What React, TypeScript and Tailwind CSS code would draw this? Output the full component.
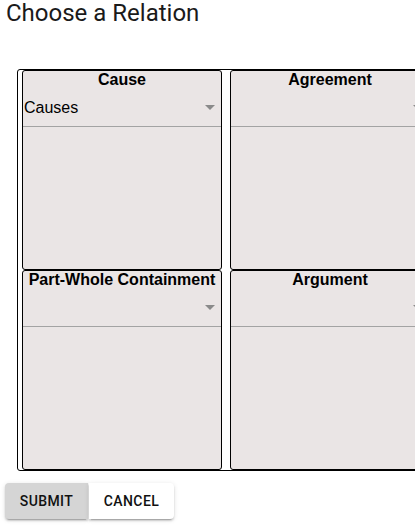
import React from "react"

const relations = [
  { title: "Cause", value: "Causes" },
  { title: "Agreement", value: "" },
  { title: "Part-Whole Containment", value: "" },
  { title: "Argument", value: "" },
]

function RelationCell({ title, value }: { title: string; value: string }) {
  return (
    <div className="flex h-[200px] w-[200px] shrink-0 flex-col rounded-[3px] border border-black bg-[#eae5e5]">
      <div className="text-center text-[16px] font-bold leading-[18px] text-black">{title}</div>
      {/* select */}
      <div className="flex h-[38px] items-start justify-between border-b border-[#a3a3a3] pl-[1px] pr-[6px] pt-[9px]">
        <span className="h-[19px] text-[16px] leading-[19px] text-black">{value}</span>
        <svg width="10" height="5" viewBox="0 0 10 5" className="mt-[7px]">
          <path d="M0 0 L10 0 L5 5 Z" fill="#8a8a8a" />
        </svg>
      </div>
    </div>
  )
}

export default function App() {
  return (
    <div
      className="h-[528px] w-[415px] overflow-hidden bg-white"
      style={{ fontFamily: '"Liberation Sans", Arial, sans-serif' }}
    >
      <h1 className="pl-[6px] text-[24px] leading-[27px] text-[#1a1a1a]" style={{ fontFamily: "Roboto, sans-serif" }}>
        Choose a Relation
      </h1>

      <div className="ml-[17px] mt-[42px] w-[430px] rounded-[3px] border border-black pl-[4px]">
        <div className="flex w-[420px] flex-wrap gap-x-[8px]">
          {relations.map((r) => (
            <RelationCell key={r.title} title={r.title} value={r.value} />
          ))}
        </div>
      </div>

      <div className="ml-[5px] mt-[12px] flex" style={{ fontFamily: "Roboto, sans-serif" }}>
        <button className="h-[36px] w-[83px] rounded-l-[4px] bg-[#d5d5d5] text-[14px] font-medium uppercase tracking-[0.4px] text-[#111] shadow-[0_3px_1px_-2px_rgba(0,0,0,0.2),0_2px_2px_0_rgba(0,0,0,0.14),0_1px_5px_0_rgba(0,0,0,0.12)]">
          Submit
        </button>
        <button className="ml-[1px] h-[36px] w-[85px] rounded-r-[4px] bg-white text-[14px] font-medium uppercase tracking-[0.4px] text-[#111] shadow-[0_3px_1px_-2px_rgba(0,0,0,0.2),0_2px_2px_0_rgba(0,0,0,0.14),0_1px_5px_0_rgba(0,0,0,0.12)]">
          Cancel
        </button>
      </div>
    </div>
  )
}
